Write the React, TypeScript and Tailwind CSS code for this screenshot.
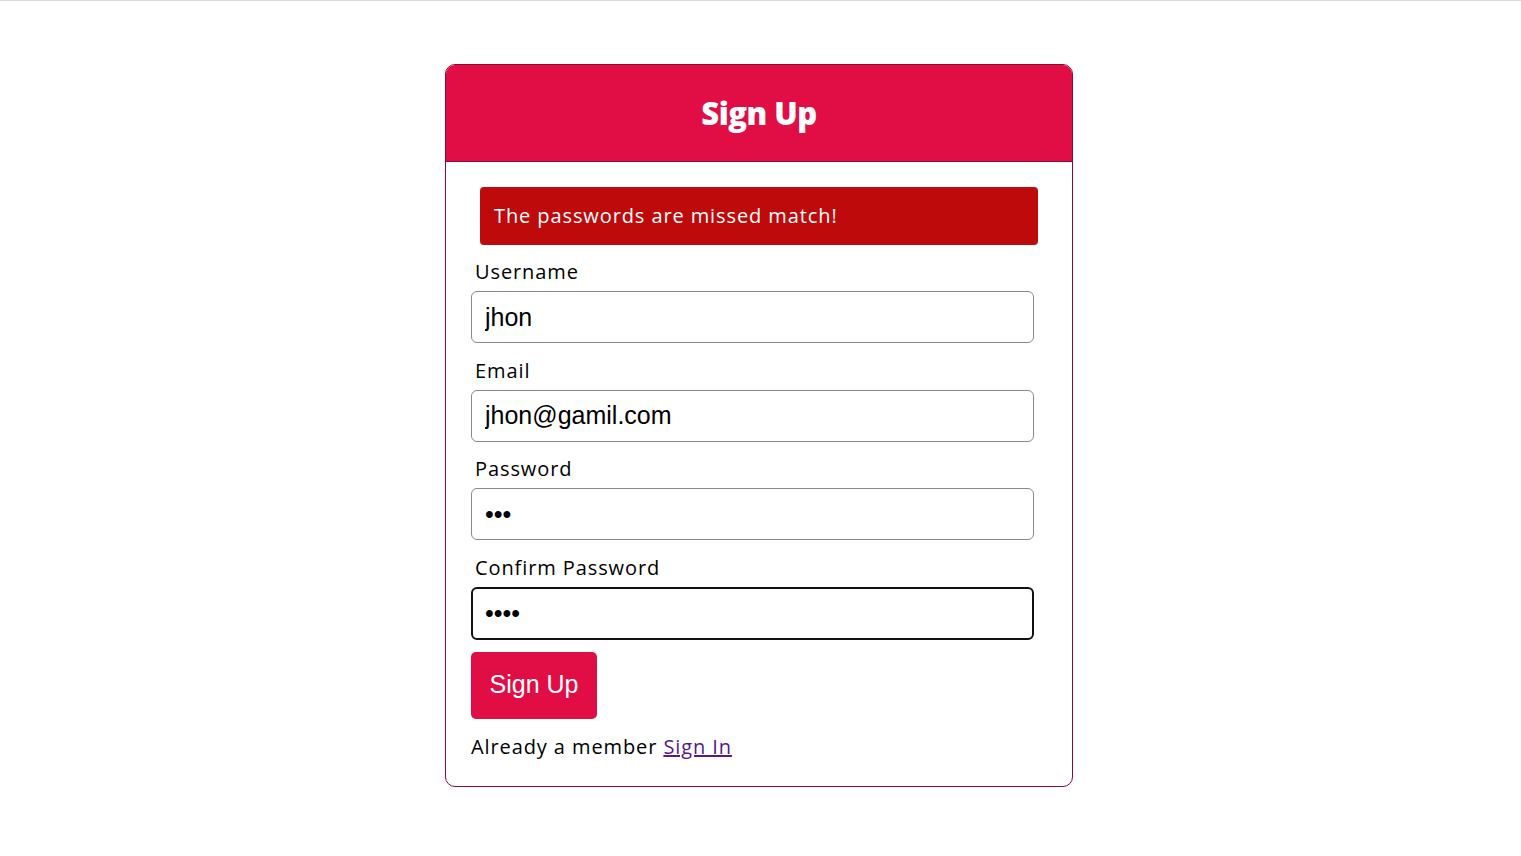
import { useState } from "react";

const poppins = "font-['Open_Sans','Liberation_Sans',sans-serif]";
const arial = "font-['Liberation_Sans',Arial,sans-serif]";

const Field = ({
  label,
  type,
  value,
  focused,
}: {
  label: string;
  type: string;
  value: string;
  focused?: boolean;
}) => {
  const [val, setVal] = useState(value);
  return (
    <div className="flex flex-col mb-[13.67px]">
      <label className={`${poppins} text-[20px] tracking-[0.9px] leading-[27px] text-black ml-1 mb-[6px]`}>
        {label}
      </label>
      <input
        type={type}
        value={val}
        autoFocus={focused}
        onChange={(e) => setVal(e.target.value)}
        className={`${arial} w-[563px] h-[52px] text-[25px] text-black rounded-[6px] outline-none ${
          focused ? "border-2 border-[#111] px-[12px] h-[53px]" : "border border-[#8a8a8a] px-[13px]"
        }`}
      />
    </div>
  );
};

const App = () => {
  return (
    <div className="min-h-screen bg-white border-t border-[#dcdcdc] flex justify-center pt-[63px]">
      <div className="w-[628px] mr-[3px] h-fit border border-[#8b0a35] rounded-[10px] overflow-hidden">
        <div className="h-[97px] bg-[#e10e45] border-b border-[#8b0a35] flex items-center justify-center">
          <h1 className={`${poppins} text-white text-[31px] font-extrabold tracking-[-0.5px]`}>Sign Up</h1>
        </div>
        <div className="pl-[25px] pt-[25px] pb-[25px]">
          <div
            className={`${poppins} ml-[9px] w-[558px] h-[58px] bg-[#be0a0a] rounded-[4px] text-white text-[20px] tracking-[0.9px] flex items-center pl-[14px] mb-[13px]`}
          >
            The passwords are missed match!
          </div>
          <Field label="Username" type="text" value="jhon" />
          <Field label="Email" type="email" value="jhon@gamil.com" />
          <Field label="Password" type="password" value="abc" />
          <Field label="Confirm Password" type="password" value="abcd" focused />
          <button
            className={`${arial} -mt-[2px] w-[126px] h-[67px] bg-[#e10e45] text-white text-[25px] rounded-[5px]`}
          >
            Sign Up
          </button>
          <p className={`${poppins} text-[20px] tracking-[0.9px] leading-[28px] text-black mt-[14px]`}>
            Already a member{" "}
            <a href="#" className="text-[#551a8b] underline">
              Sign In
            </a>
          </p>
        </div>
      </div>
    </div>
  );
};

export default App;
